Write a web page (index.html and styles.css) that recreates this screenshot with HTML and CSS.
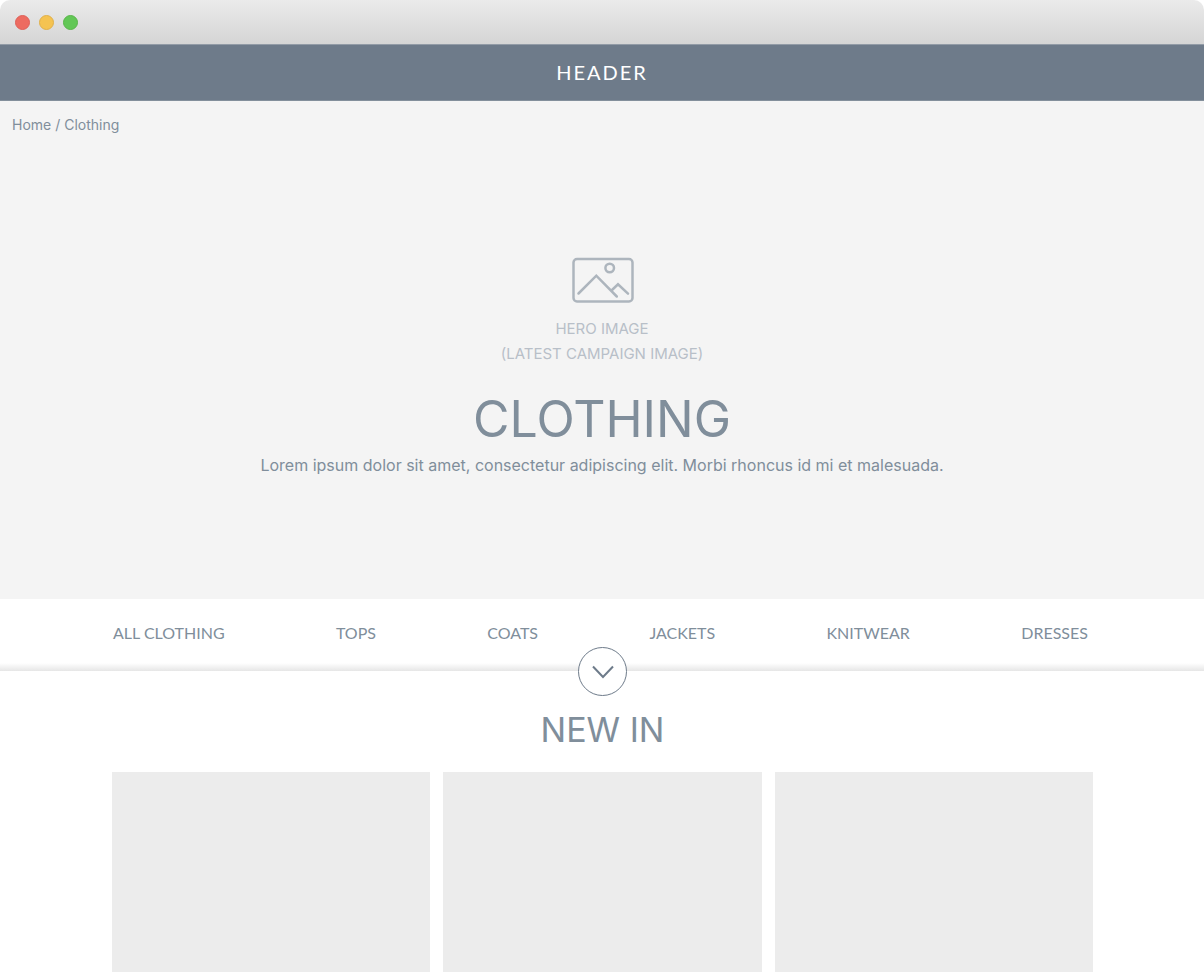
FILE: index.html
```html
<!DOCTYPE html>
<html lang="en">
  <head>
    <meta charset="UTF-8" />
    <meta name="viewport" content="width=device-width, initial-scale=1.0" />
    <title>Clothing</title>
    <link rel="stylesheet" href="styles.css">
  </head>
  <body>
    <div class="window">
      <div class="title-bar">
        <button class="dot close" aria-label="Close"></button>
        <button class="dot minimise" aria-label="Minimise"></button>
        <button class="dot expand" aria-label="Expand"></button>
      </div>

      <header class="site-header">HEADER</header>

      <section class="hero">
        <nav class="breadcrumb" aria-label="Breadcrumb">
          <a href="#">Home</a> / <a href="#">Clothing</a>
        </nav>
        <div class="hero-content">
          <svg class="hero-icon" width="64" height="46" viewBox="0 0 64 46" aria-hidden="true">
            <rect x="3.5" y="2" width="59" height="42.5" rx="3.5" />
            <circle cx="39.7" cy="11" r="4.3" />
            <path d="M8.5 36.5 26.3 18.7 46.8 39.5M41.5 33.5 48 27.3 58 36.7" />
          </svg>
          <p class="hero-note">HERO IMAGE<br />(LATEST CAMPAIGN IMAGE)</p>
          <h1>CLOTHING</h1>
          <p class="intro">
            Lorem ipsum dolor sit amet, consectetur adipiscing elit. Morbi
            rhoncus id mi et malesuada.
          </p>
        </div>
      </section>

      <nav class="categories" aria-label="Categories">
        <ul class="category-list">
          <li><a href="#">ALL CLOTHING</a></li>
          <li><a href="#">TOPS</a></li>
          <li><a href="#">COATS</a></li>
          <li><a href="#">JACKETS</a></li>
          <li><a href="#">KNITWEAR</a></li>
          <li><a href="#">DRESSES</a></li>
        </ul>
        <button class="scroll-btn" aria-label="Scroll to new in">
          <svg width="22" height="14" viewBox="0 0 22 14" aria-hidden="true">
            <path d="M1 1.5 11 12 21 1.5" />
          </svg>
        </button>
      </nav>

      <main class="new-in">
        <h2>NEW IN</h2>
        <div class="products">
          <div class="product"></div>
          <div class="product"></div>
          <div class="product"></div>
        </div>
      </main>
    </div>
  </body>
</html>
```

FILE: styles.css
```css
* {
  box-sizing: border-box;
}
body {
  margin: 0;
  background-color: #fff;
  color: #808e9b;
  font-family: Inter, sans-serif;
}
a {
  color: inherit;
  text-decoration: none;
}
h1,
h2,
p {
  margin: 0;
  font-weight: 400;
}
.window {
  display: flex;
  flex-direction: column;
  min-height: 100vh;
}
.title-bar {
  display: flex;
  align-items: center;
  gap: 9px;
  height: 44px;
  padding: 0 15px;
  background: linear-gradient(#ebebeb, #d5d5d5);
  border-radius: 10px 10px 0 0;
}
.dot {
  width: 15px;
  height: 15px;
  padding: 0;
  border: 1px solid #de6058;
  border-radius: 50%;
  background-color: #ed6b60;
}
.minimise {
  border-color: #e0b04a;
  background-color: #f5c351;
}
.expand {
  border-color: #58b549;
  background-color: #62c756;
}
.site-header {
  height: 57px;
  background-color: #6e7b8a;
  border-top: 1px solid #929ba6;
  border-bottom: 1px solid #838f9b;
  color: #fff;
  font-family: Lato, sans-serif;
  font-size: 20px;
  line-height: 55px;
  letter-spacing: 2px;
  text-align: center;
}
.hero {
  min-height: 498px;
  padding: 12px;
  background-color: #f4f4f4;
}
.breadcrumb {
  font-size: 14px;
  line-height: 24px;
}
.hero-content {
  display: flex;
  flex-direction: column;
  align-items: center;
  padding-top: 120px;
  text-align: center;
}
.hero-icon {
  fill: none;
  stroke: #adb5bd;
  stroke-width: 2.5;
  stroke-linecap: round;
}
.hero-note {
  margin-top: 13px;
  color: #b8bfc8;
  font-size: 15px;
  line-height: 25px;
}
h1 {
  margin-top: 21px;
  font-size: 50px;
  line-height: 64px;
}
.intro {
  margin-top: 2px;
  font-size: 16px;
  line-height: 24px;
}
.categories {
  position: relative;
  height: 72px;
  padding: 0 116px 0 113px;
  background: linear-gradient(#fff 64px, #e6e6e6);
}
.category-list {
  display: flex;
  justify-content: space-between;
  margin: 0;
  padding: 0;
  list-style: none;
  font-family: Lato, sans-serif;
  font-size: 16px;
  line-height: 68px;
}
/* sits over the bottom edge of the category bar */
.scroll-btn {
  position: absolute;
  bottom: -25px;
  left: calc(50% - 24px);
  display: flex;
  align-items: center;
  justify-content: center;
  width: 49px;
  height: 49px;
  padding: 0;
  border: 1px solid #6e7b8a;
  border-radius: 50%;
  background-color: #fff;
  cursor: pointer;
}
.scroll-btn svg {
  fill: none;
  stroke: #6e7b8a;
  stroke-width: 2;
}
.new-in {
  flex: 1;
  display: flex;
  flex-direction: column;
  padding: 35px 111px 0 112px;
}
h2 {
  font-size: 34px;
  line-height: 48px;
  text-align: center;
}
.products {
  flex: 1;
  display: grid;
  grid-template-columns: repeat(3, 1fr);
  gap: 13px;
  min-height: 199px;
  margin-top: 18px;
}
.product {
  background-color: #ececec;
}
```
